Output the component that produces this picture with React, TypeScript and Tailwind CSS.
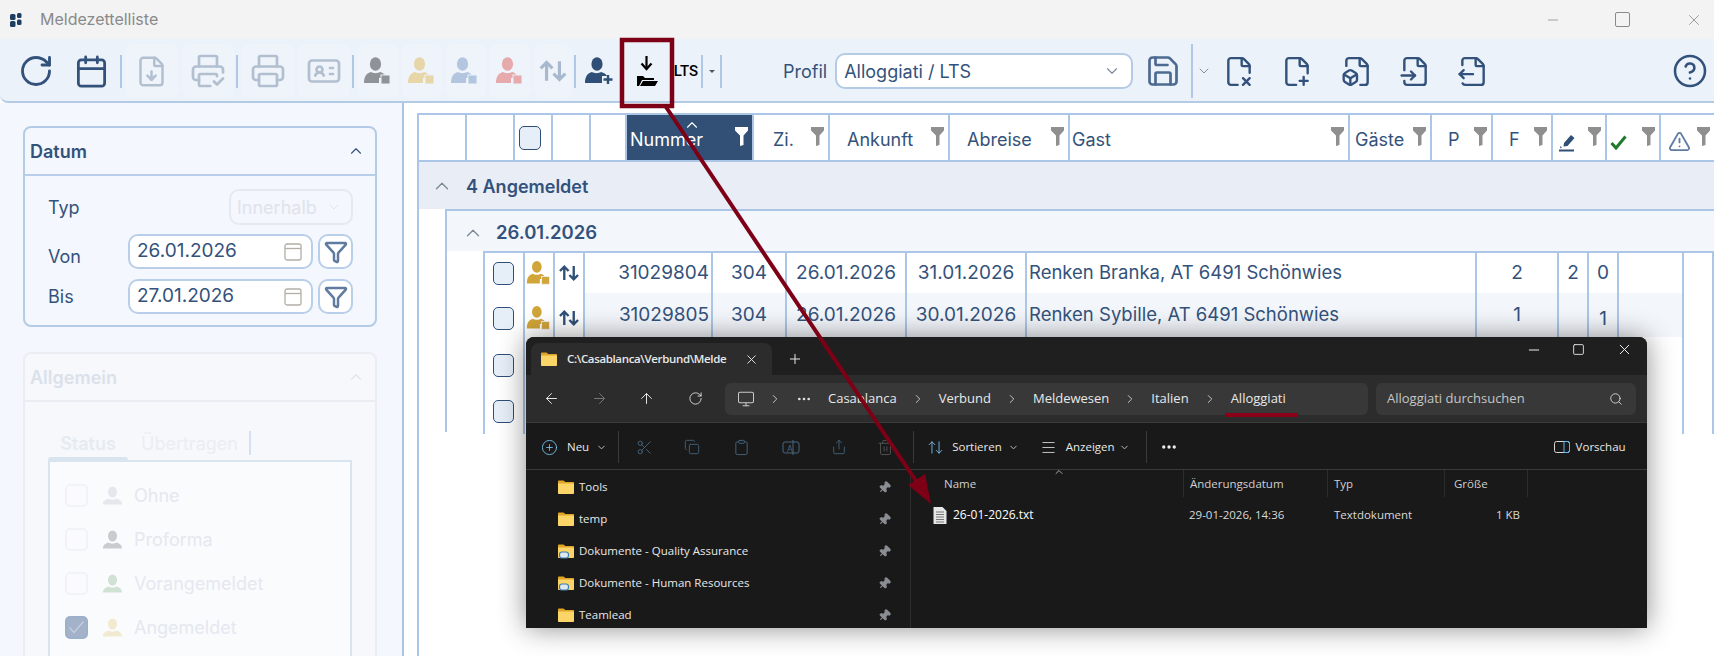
import {
  ArrowLeft,
  ArrowRight,
  ArrowUp,
  ArrowUpDown,
  Calendar,
  ChevronDown,
  ChevronRight,
  ChevronUp,
  CirclePlus,
  Clipboard,
  CircleHelp,
  Copy,
  Ellipsis,
  FileBox,
  FileDown,
  FileInput,
  FileOutput,
  FilePlus2,
  FileX2,
  Funnel,
  IdCard,
  Menu,
  Minus,
  Monitor,
  Pin,
  Plus,
  Printer,
  PrinterCheck,
  RotateCw,
  Save,
  Scissors,
  Search,
  Share,
  Square,
  Trash2,
  TriangleAlert,
  X,
} from "lucide-react";

const ink = "#33527b";

function PersonIcon({ color, badge, size = 30 }: { color: string; badge?: boolean; size?: number }) {
  return (
    <svg width={size} height={size} viewBox="0 0 30 30">
      <ellipse cx="12.5" cy="8" rx="5.6" ry="6.8" fill={color} />
      <path d="M1 27c0-7 3-10 7-11 2 1.500 7 1.500 9 0 3 .8 6 3 6.500 6H16v5z" fill={color} />
      {badge && <rect x="18" y="19" width="9" height="9" fill={color} stroke="#ecf2fa" strokeWidth="1" />}
    </svg>
  );
}

function PlainPerson({ color }: { color: string }) {
  return (
    <svg width="19" height="19" viewBox="0 0 19 19">
      <ellipse cx="9.500" cy="6" rx="4.500" ry="5.500" fill={color} />
      <path d="M0 18.500c0-3.500 2.500-5 5.500-6 2 1.500 6 1.500 8 0 3 1 5.500 2.500 5.500 6z" fill={color} />
    </svg>
  );
}

function PersonPlusIcon() {
  return (
    <svg width="30" height="30" viewBox="0 0 30 30">
      <ellipse cx="12" cy="8" rx="5.600" ry="6.800" fill="#2f4f78" />
      <path d="M0 27c0-7 3-10 7-11 2 1.500 7 1.500 9 0 3 .8 5 2 6 4h-5v7z" fill="#2f4f78" />
      <path d="M23 19v9M18.500 23.500h9" stroke="#2f4f78" strokeWidth="2.400" />
    </svg>
  );
}

function SwapArrows({ color, size = 28 }: { color: string; size?: number }) {
  return (
    <svg width={size} height={size} viewBox="0 0 28 28" fill="none" stroke={color} strokeWidth="3">
      <path d="M8 23V6M2.500 11.500 8 6l5.500 5.500M20 5v17M14.500 16.500 20 22l5.500-5.500" />
    </svg>
  );
}

function FolderArrowIcon() {
  return (
    <svg width="24" height="32" viewBox="0 0 24 32">
      <path d="M11.500 1v11" stroke="#000" strokeWidth="2.200" />
      <path d="M6.500 8.500 11.500 14l5-5.500" stroke="#000" strokeWidth="2.200" fill="none" />
      <path d="M2 31V21h6l2 2h9v2H7l-3 6z" fill="#000" />
      <path d="M5 31l3-5h15l-3 5z" fill="#000" />
    </svg>
  );
}

function TableFunnel({ white }: { white?: boolean }) {
  return (
    <svg className="absolute right-[4px] top-[12px]" width="13" height="19" viewBox="0 0 13 19">
      <path d="M0 0h13v3.500L8.500 8.500V18l-3.500 1V8.500L0 3.500z" fill={white ? "#fff" : "#8f8f8f"} />
    </svg>
  );
}

function PencilMark() {
  return (
    <svg width="17" height="19" viewBox="0 0 17 19">
      <path d="M5 10 12 2l3.500 3-7 8-4 .5z" fill="#2f4f78" />
      <path d="M1 13l2 1.500-1.500 1z" fill="#2f4f78" />
      <path d="M0 17.500h15" stroke="#2f4f78" strokeWidth="2" />
    </svg>
  );
}

function GreenCheck() {
  return (
    <svg width="17" height="15" viewBox="0 0 17 15" fill="none">
      <path d="M1.500 8 6 13 15.500 1.500" stroke="#1f7a2c" strokeWidth="3" />
    </svg>
  );
}

function SmallCalendar() {
  return (
    <svg width="18" height="18" viewBox="0 0 18 18" fill="none">
      <rect x="1" y="1" width="16" height="16" rx="2" stroke="#b3aea6" strokeWidth="1.300" />
      <path d="M1 5.500h16" stroke="#b3aea6" strokeWidth="1.300" />
    </svg>
  );
}

function Checkbox() {
  return <div className="w-[21px] h-[23px] rounded-[5px] border-[1.5px] border-[#2f4f78] bg-[#e6eef8]" />;
}

function ExplorerFolder({ network, size = 16 }: { network?: boolean; size?: number }) {
  return (
    <svg width={size} height={size} viewBox="0 0 16 16">
      <path d="M0 2.500C0 1.700.6 1.500 1 1.500h4.500L7.300 3H15c.6 0 1 .4 1 1v1H0z" fill="#e0a526" />
      <path d="M0 4.500h16V14c0 .6-.4 1-1 1H1c-.6 0-1-.4-1-1z" fill="#fcd568" />
      {network && <rect x="1.500" y="9" width="9" height="6" rx="2.500" fill="#dfe7ef" stroke="#3f7fb5" strokeWidth="1.200" />}
    </svg>
  );
}

function TxtFile() {
  return (
    <svg width="14" height="17" viewBox="0 0 14 17">
      <path d="M.5 0H9.500L13.500 4V17H.5z" fill="#e6e6e6" />
      <path d="M3 5h8M3 7.500h8M3 10h8M3 12.500h8M3 15h8" stroke="#777" strokeWidth="1" />
    </svg>
  );
}

const toolBase = "flex items-center justify-center shrink-0";
const fadedBox = "h-[54px] rounded-lg bg-white/20 flex items-center justify-center";

function ToolSep({ w = "w-[4px]" }: { w?: string }) {
  return (
    <div className={`${toolBase} ${w}`}>
      <div className="w-[2px] h-[33px] bg-[#aec8e6]" />
    </div>
  );
}

function Toolbar() {
  return (
    <div className="flex items-center h-[64px] pl-[8px] pt-[2px] bg-[#ecf2fa] border-b-2 border-[#b4cbe6] rounded-bl-lg shrink-0">
      <div className={`${toolBase} w-[55px]`}><RotateCw size={36} color={ink} strokeWidth={1.900} /></div>
      <div className={`${toolBase} w-[56px]`}><Calendar size={35} color={ink} strokeWidth={1.900} /></div>
      <ToolSep />
      <div className={`${toolBase} w-[57px]`}><div className={`${fadedBox} w-[54px]`}><FileDown size={33} color="#b2bfd0" strokeWidth={1.800} /></div></div>
      <div className={`${toolBase} w-[55px]`}><div className={`${fadedBox} w-[52px]`}><PrinterCheck size={36} color="#b2bfd0" strokeWidth={1.800} /></div></div>
      <ToolSep />
      <div className={`${toolBase} w-[57px]`}><div className={`${fadedBox} w-[54px]`}><Printer size={36} color="#b2bfd0" strokeWidth={1.800} /></div></div>
      <div className={`${toolBase} w-[55px]`}><div className={`${fadedBox} w-[52px]`}><IdCard size={36} color="#b2bfd0" strokeWidth={1.800} /></div></div>
      <ToolSep />
      <div className={`${toolBase} w-[45px]`}><div className={`${fadedBox} w-[42px]`}><PersonIcon color="#8f9296" badge /></div></div>
      <div className={`${toolBase} w-[43px]`}><div className={`${fadedBox} w-[40px]`}><PersonIcon color="#e6d6a8" badge /></div></div>
      <div className={`${toolBase} w-[44px]`}><div className={`${fadedBox} w-[41px]`}><PersonIcon color="#b2c6e0" badge /></div></div>
      <div className={`${toolBase} w-[45px]`}><div className={`${fadedBox} w-[42px]`}><PersonIcon color="#e6a9ac" badge /></div></div>
      <div className={`${toolBase} w-[41px]`}><div className={`${fadedBox} w-[38px]`}><SwapArrows color="#a9b9cd" size={30} /></div></div>
      <ToolSep />
      <div className={`${toolBase} w-[46px]`}><PersonPlusIcon /></div>
      <div className={`${toolBase} w-[48px]`}><FolderArrowIcon /></div>
      <div className={`${toolBase} w-[30px] text-[15px] font-medium text-black font-['Roboto',sans-serif]`}>LTS</div>
      <ToolSep w="w-[2px]" />
      <div className={`${toolBase} w-[17px]`}><div className="w-0 h-0 border-x-[3px] border-x-transparent border-t-[3px] border-t-[#555]" /></div>
      <ToolSep w="w-[2px]" />
      <span className="ml-[61px] text-[18px] text-[#33527b]">Profil</span>
      <div className="ml-[8px] w-[298px] h-[36px] px-[7px] flex items-center justify-between rounded-[10px] border-2 border-[#b4cbe6] bg-white text-[18px] text-[#33527b]">
        <span>Alloggiati / LTS</span>
        <ChevronDown size={18} color="#7a8a9c" strokeWidth={1.500} className="mr-[3px]" />
      </div>
      <div className={`${toolBase} ml-[12px] w-[36px]`}><Save size={36} color="#4d6a90" strokeWidth={1.800} /></div>
      <div className="ml-[10px] w-[2px] h-[54px] bg-[#aec8e6]" />
      <div className={`${toolBase} w-[22px]`}><ChevronDown size={16} color="#7a8a9c" strokeWidth={1.400} /></div>
      <div className={`${toolBase} ml-[8px] w-[32px]`}><FileX2 size={37} color={ink} strokeWidth={1.800} /></div>
      <div className={`${toolBase} ml-[26px] w-[32px]`}><FilePlus2 size={37} color={ink} strokeWidth={1.800} /></div>
      <div className={`${toolBase} ml-[28px] w-[32px]`}><FileBox size={37} color={ink} strokeWidth={1.800} /></div>
      <div className={`${toolBase} ml-[26px] w-[32px]`}><FileInput size={37} color={ink} strokeWidth={1.800} /></div>
      <div className={`${toolBase} ml-[26px] w-[32px]`}><FileOutput size={37} color={ink} strokeWidth={1.800} /></div>
      <div className={`${toolBase} ml-[183px] w-[36px]`}><CircleHelp size={38} color={ink} strokeWidth={1.700} /></div>
    </div>
  );
}

function DateRow({ label, value, labelPad, className }: { label: string; value: string; labelPad?: string; className?: string }) {
  return (
    <div className={`flex items-center pl-[23px] ${className ?? ""}`}>
      <span className={`w-[80px] ${labelPad ?? ""}`}>{label}</span>
      <div className="w-[185px] h-[35px] flex items-center justify-between pl-[7px] pr-[9px] rounded-[10px] border-2 border-[#b9cfe9] bg-white">
        <span className="text-[19px]">{value}</span>
        <SmallCalendar />
      </div>
      <div className="ml-[5px] w-[35px] h-[35px] flex items-center justify-center rounded-[10px] border-2 border-[#b9cfe9] bg-white">
        <Funnel size={24} color="#5f7ba0" strokeWidth={2.500} />
      </div>
    </div>
  );
}

function StatusRow({ label, color, checked }: { label: string; color: string; checked?: boolean }) {
  return (
    <div className="flex items-center h-[44px]">
      <div className={`w-[23px] h-[23px] rounded-[5px] border-2 flex items-center justify-center ${checked ? "bg-[#a3b2c8] border-[#9db0c9]" : "bg-[#fbfbfd] border-[#f1f3f7]"}`}>
        {checked && (
          <svg width="17" height="14" viewBox="0 0 17 14" fill="none">
            <path d="M1.500 7.500 6 12.500 15.500 1.500" stroke="#c4cfdd" strokeWidth="1.300" />
          </svg>
        )}
      </div>
      <div className="ml-[15px] w-[19px] flex justify-center">
        <PlainPerson color={color} />
      </div>
      <span className="ml-[12px] text-[#e4e8f0]">{label}</span>
    </div>
  );
}

function Sidebar() {
  return (
    <aside className="w-[404px] shrink-0 bg-[#f4f7fd] border-r-2 border-[#a9c5e6] pl-[23px] pt-[23px] text-[18px] text-[#33527b]">
      <section className="w-[354px] h-[201px] rounded-lg border-2 border-[#b4cbe6]">
        <div className="h-[48px] flex items-center justify-between pl-[5px] pr-[10px] border-b-2 border-[#b9cfe9]">
          <span className="font-semibold pt-[1px]">Datum</span>
          <ChevronUp size={18} color="#33527b" strokeWidth={1.500} />
        </div>
        <div className="flex items-center pl-[23px] pr-[22px] mt-[13px]">
          <span className="flex-1">Typ</span>
          <div className="w-[124px] h-[36px] flex items-center justify-between pl-[6px] pr-[9px] rounded-[10px] border-2 border-[#e6eaf0] text-[#dfe3ea]">
            <span>Innerhalb</span>
            <ChevronDown size={16} color="#e0e4ea" strokeWidth={1.500} />
          </div>
        </div>
        <DateRow label="Von" value="26.01.2026" labelPad="pt-[10px]" className="mt-[8px]" />
        <DateRow label="Bis" value="27.01.2026" className="mt-[9px]" />
      </section>
      <section className="mt-[25px] w-[354px] h-[400px] rounded-lg border-2 border-[#eaedf3] bg-[#f6f8fc]">
        <div className="h-[48px] flex items-center justify-between pl-[5px] pr-[10px] border-b-2 border-[#eaedf3]">
          <span className="font-semibold text-[#dbe1ea]">Allgemein</span>
          <ChevronUp size={18} color="#e0e4ea" strokeWidth={1.500} />
        </div>
        <div className="ml-[23px] mr-[23px] mt-[27px]">
          <div className="flex items-center h-[28px]">
            <span className="w-[80px] text-center font-semibold text-[#e6ebf2]">Status</span>
            <span className="ml-[13px] text-[#eaedf3]">Übertragen</span>
            <div className="ml-[11px] w-[2px] h-[24px] bg-[#d6e2f0]" />
          </div>
          <div className="w-[80px] h-[3px] rounded-t bg-[#d8e4f0]" />
          <div className="h-[300px] border-2 border-[#d8e4f0] bg-[#fafbfd] pl-[15px] pt-[11px]">
            <StatusRow label="Ohne" color="#e4e7ec" />
            <StatusRow label="Proforma" color="#c9cbce" />
            <StatusRow label="Vorangemeldet" color="#cfe2d3" />
            <StatusRow label="Angemeldet" color="#f2ead0" checked />
          </div>
        </div>
      </section>
    </aside>
  );
}

const headerCols = [
  { w: "w-[46px]" },
  { w: "w-[48px]" },
  { w: "w-[38px]", check: true },
  { w: "w-[38px]" },
  { w: "w-[36px]" },
  { w: "w-[127px]", label: "Nummer", pl: "pl-[3px]", active: true },
  { w: "w-[76px]", label: "Zi.", pl: "pl-[19px]", funnel: true },
  { w: "w-[120px]", label: "Ankunft", pl: "pl-[17px]", funnel: true },
  { w: "w-[120px]", label: "Abreise", pl: "pl-[17px]", funnel: true },
  { w: "w-[280px]", label: "Gast", pl: "pl-[2px]", funnel: true },
  { w: "w-[82px]", label: "Gäste", pl: "pl-[5px]", funnel: true },
  { w: "w-[61px]", label: "P", pl: "pl-[16px]", funnel: true },
  { w: "w-[60px]", label: "F", pl: "pl-[16px]", funnel: true },
  { w: "w-[54px]", icon: "pencil", funnel: true },
  { w: "w-[54px]", icon: "check", funnel: true },
  { w: "w-[55px]", icon: "warn", funnel: true },
];

function TableHeader() {
  return (
    <div className="flex h-[49px] border-y-2 border-[#abc6e6] bg-white text-[18px] text-[#33527b] shrink-0">
      {headerCols.map((c, i) => (
        <div
          key={i}
          className={`relative flex items-center shrink-0 ${c.w} ${c.pl ?? ""} ${i > 0 ? "border-l-2 border-[#abc6e6]" : ""} ${c.active ? "bg-[#325076] text-white" : ""}`}
        >
          {c.check && (
            <div className="ml-[4px] w-[22px] h-[24px] rounded-[5px] border-[1.5px] border-[#2f4f78] bg-[#e6eef8]" />
          )}
          {c.label && <span className="mt-[3px]">{c.label}</span>}
          {c.active && <ChevronUp size={18} color="#fff" strokeWidth={1.500} className="absolute left-[56px] top-[1px]" />}
          {c.icon === "pencil" && <div className="pl-[6px] pt-[9px]"><PencilMark /></div>}
          {c.icon === "check" && <div className="pl-[3px] pt-[10px]"><GreenCheck /></div>}
          {c.icon === "warn" && <div className="pl-[7px] pt-[8px]"><TriangleAlert size={23} color="#5f7b9f" strokeWidth={1.900} /></div>}
          {(c.funnel || c.active) && <TableFunnel white={c.active} />}
        </div>
      ))}
    </div>
  );
}

const rows = [
  { h: "h-[40px]", chk: "", nr: "31029804", a: "26.01.2026", b: "31.01.2026", g: "Renken Branka, AT 6491 Schönwies", p: "2", f: "2", z: "0", bg: "" },
  { h: "h-[44px]", chk: "pt-[6px]", nr: "31029805", a: "26.01.2026", b: "30.01.2026", g: "Renken Sybille, AT 6491 Schönwies", p: "1", f: "", z: "1", bg: "bg-[#f3f6fb]" },
  { h: "h-[46px]", chk: "pt-[10px]", nr: "", a: "", b: "", g: "", p: "", f: "", z: "", bg: "" },
  { h: "h-[51px]", chk: "pt-[5px]", nr: "", a: "", b: "", g: "", p: "", f: "", z: "", bg: "" },
];

const line = "border-l-2 border-[#abc6e6]";

function DataRow({ r }: { r: (typeof rows)[number] }) {
  const shown = r.nr !== "";
  return (
    <div className={`flex ${r.h} text-[19px] text-[#33527b]`}>
      <div className={`w-[38px] shrink-0 flex items-center justify-center pr-[2px] ${r.chk}`}><Checkbox /></div>
      <div className={`w-[30px] shrink-0 flex items-center justify-center ${r.chk} ${line}`}>
        {shown && <PersonIcon color="#d2a53a" badge size={26} />}
      </div>
      <div className={`w-[30px] shrink-0 flex items-center justify-center ${r.chk} ${line}`}>
        {shown && <SwapArrows color="#2f4f78" size={22} />}
      </div>
      <div className={`flex flex-1 ${r.bg}`}>
        <div className={`w-[128px] flex items-center justify-end pr-[2px] ${line}`}>{r.nr}</div>
        <div className={`w-[74px] flex items-center justify-center ${line}`}>{shown ? "304" : ""}</div>
        <div className={`w-[120px] flex items-center justify-center ${line}`}>{r.a}</div>
        <div className={`w-[120px] flex items-center justify-center ${line}`}>{r.b}</div>
        <div className={`w-[450px] flex items-center pl-[2px] text-[18.5px] ${line}`}>{r.g}</div>
        <div className={`w-[82px] flex items-center justify-center ${line}`}>{r.p}</div>
        <div className={`w-[30px] flex items-center justify-center ${line}`}>{r.f}</div>
        <div className={`w-[30px] flex items-center justify-center ${line} ${r.z === "1" ? "pt-[8px]" : ""}`}>{r.z}</div>
        <div className={`w-[30px] ${line}`} />
      </div>
      <div className={`w-[30px] bg-white ${line}`} />
      <div className={`w-[2px] ${line}`} />
    </div>
  );
}

function MainTable() {
  return (
    <main className="flex-1 pl-[13px] pt-[10px] bg-white min-w-0">
      <div className="flex flex-col h-full border-l-2 border-[#abc6e6]">
        <TableHeader />
        <div className="h-[47px] shrink-0 flex items-center bg-[#e8edf6] text-[18px] font-semibold text-[#33527b]">
          <ChevronUp size={22} color="#7d8896" strokeWidth={1.400} className="ml-[12px]" />
          <span className="ml-[13px] pt-[1px]">4 Angemeldet</span>
        </div>
        <div className="ml-[26px] border-l-2 border-[#abc6e6] h-[223px] shrink-0">
          <div className="h-[42px] flex items-center border-t-2 border-[#abc6e6] bg-[#f3f6fb] text-[18.5px] font-semibold text-[#33527b]">
            <ChevronUp size={22} color="#7d8896" strokeWidth={1.400} className="ml-[15px] mt-[4px]" />
            <span className="ml-[12px] pt-[4px]">26.01.2026</span>
          </div>
          <div className="ml-[36px] border-l-2 border-t-2 border-[#abc6e6]">
            {rows.map((r, i) => (
              <DataRow key={i} r={r} />
            ))}
          </div>
        </div>
      </div>
    </main>
  );
}

const navFolders = [
  { name: "Tools" },
  { name: "temp" },
  { name: "Dokumente - Quality Assurance", network: true },
  { name: "Dokumente - Human Resources", network: true },
  { name: "Teamlead" },
];

function Crumb({ label, className }: { label: string; className?: string }) {
  return (
    <>
      <ChevronRight size={14} color="#d8d8d8" strokeWidth={1.500} className={className} />
      <span className="ml-[14px]">{label}</span>
    </>
  );
}

function Explorer() {
  return (
    <div className="absolute left-[526px] top-[337px] w-[1121px] h-[291px] rounded-t-lg flex flex-col overflow-hidden bg-[#191919] text-[13px] text-[#e8e8e8] shadow-[0_0_28px_rgba(0,0,0,0.45)] font-['Open_Sans',sans-serif]">
      <div className="h-[38px] shrink-0 flex items-end bg-[#1f1f1f]">
        <div className="ml-[5px] w-[241px] h-[32px] flex items-center rounded-t-lg bg-[#2c2c2c] pl-[10px]">
          <ExplorerFolder />
          <span className="ml-[10px] w-[163px] text-[11.5px] font-semibold tracking-[-0.35px] whitespace-nowrap">C:\Casablanca\Verbund\Melde</span>
          <X size={15} color="#e8e8e8" strokeWidth={1.500} className="ml-[14px]" />
        </div>
        <Plus size={16} color="#e8e8e8" strokeWidth={1.500} className="ml-[15px] mb-[8px]" />
        <div className="flex-1 flex items-center justify-end self-stretch pb-[13px]">
          <Minus size={16} color="#f0f0f0" strokeWidth={1.500} />
          <Square size={13} color="#f0f0f0" strokeWidth={1.600} className="ml-[30px]" />
          <X size={17} color="#f0f0f0" strokeWidth={1.400} className="ml-[31px] mr-[14px]" />
        </div>
      </div>
      <div className="h-[48px] shrink-0 flex items-center bg-[#2c2c2c] border-b border-[#3a3a3a]">
        <ArrowLeft size={17} color="#e6e6e6" strokeWidth={1.400} className="ml-[17px]" />
        <ArrowRight size={17} color="#777" strokeWidth={1.400} className="ml-[31px]" />
        <ArrowUp size={17} color="#e6e6e6" strokeWidth={1.400} className="ml-[30px]" />
        <RotateCw size={15} color="#e6e6e6" strokeWidth={1.400} className="ml-[33px]" />
        <div className="ml-[22px] w-[643px] h-[32px] flex items-center rounded-md bg-[#383838] pl-[12px]">
          <Monitor size={18} color="#c9c9c9" strokeWidth={1.400} />
          <ChevronRight size={14} color="#d8d8d8" strokeWidth={1.500} className="ml-[13px]" />
          <Ellipsis size={16} color="#e0e0e0" className="ml-[14px]" />
          <span className="ml-[16px]">Casablanca</span>
          <Crumb label="Verbund" className="ml-[14px]" />
          <Crumb label="Meldewesen" className="ml-[14px]" />
          <Crumb label="Italien" className="ml-[14px]" />
          <Crumb label="Alloggiati" className="ml-[14px]" />
        </div>
        <div className="ml-[8px] w-[260px] h-[32px] flex items-center justify-between rounded-md bg-[#383838] pl-[11px] pr-[13px] text-[#c6c6c6]">
          <span>Alloggiati durchsuchen</span>
          <Search size={14} color="#dcdcdc" strokeWidth={1.500} />
        </div>
      </div>
      <div className="h-[47px] shrink-0 flex items-center pt-[2px] bg-[#191919] border-b border-[#3a3a3a] text-[11.5px]">
        <CirclePlus size={17} color="#7cc8f4" strokeWidth={1.200} className="ml-[15px]" />
        <span className="ml-[9px]">Neu</span>
        <ChevronDown size={11} color="#c8c8c8" className="ml-[7px]" />
        <div className="ml-[11px] w-px h-[32px] bg-[#3a3a3a]" />
        <Scissors size={17} color="#47667f" strokeWidth={1.300} className="ml-[17px]" />
        <Copy size={16} color="#47667f" strokeWidth={1.300} className="ml-[31px]" />
        <Clipboard size={17} color="#47667f" strokeWidth={1.300} className="ml-[33px]" />
        <svg width="18" height="17" viewBox="0 0 18 17" fill="none" className="ml-[32px]">
          <rect x="1" y="3" width="16" height="11" rx="2" stroke="#47667f" />
          <text x="5" y="12.500" fontSize="9" fill="#47667f">A</text>
          <path d="M11 1v15" stroke="#47667f" />
        </svg>
        <Share size={16} color="#47667f" strokeWidth={1.300} className="ml-[31px]" />
        <Trash2 size={17} color="#555" strokeWidth={1.300} className="ml-[30px]" />
        <div className="ml-[19px] w-px h-[32px] bg-[#3a3a3a]" />
        <ArrowUpDown size={17} color="#7cc8f4" strokeWidth={1.200} className="ml-[13px]" />
        <span className="ml-[8px]">Sortieren</span>
        <ChevronDown size={11} color="#c8c8c8" className="ml-[6px]" />
        <Menu size={17} color="#e0e0e0" strokeWidth={1.200} className="ml-[21px]" />
        <span className="ml-[9px]">Anzeigen</span>
        <ChevronDown size={11} color="#c8c8c8" className="ml-[4px]" />
        <div className="ml-[16px] w-px h-[32px] bg-[#3a3a3a]" />
        <Ellipsis size={18} color="#f0f0f0" strokeWidth={2.400} className="ml-[13px]" />
        <svg width="16" height="12" viewBox="0 0 16 12" fill="none" className="ml-[376px]">
          <rect x=".5" y=".5" width="15" height="11" rx="2" stroke="#d8d8d8" />
          <path d="M10 .5h3.500a2 2 0 0 1 2 2v7a2 2 0 0 1-2 2H10z" stroke="#5db8ee" />
        </svg>
        <span className="ml-[6px]">Vorschau</span>
      </div>
      <div className="flex flex-1 min-h-0 text-[11.5px]">
        <div className="w-[385px] shrink-0 border-r border-[#2c2c2c] pl-[32px] pt-[1px] pr-[19px]">
          {navFolders.map((f) => (
            <div key={f.name} className="h-[32px] flex items-center">
              <ExplorerFolder network={f.network} />
              <span className="ml-[5px] flex-1">{f.name}</span>
              <Pin size={13} color="#8b8f94" fill="#8b8f94" className="rotate-45" />
            </div>
          ))}
        </div>
        <div className="flex-1 relative">
          <ChevronUp size={12} color="#aaa" className="absolute left-[142px] top-[-4px]" />
          <div className="grid grid-cols-[273px_144px_117px_83px] h-[27px] items-center text-[#cfcfcf]">
            <span className="pl-[33px] border-r border-[#2c2c2c] h-full flex items-center">Name</span>
            <span className="pl-[6px] border-r border-[#2c2c2c] h-full flex items-center">Änderungsdatum</span>
            <span className="pl-[6px] border-r border-[#2c2c2c] h-full flex items-center">Typ</span>
            <span className="pl-[9px] border-r border-[#2c2c2c] h-full flex items-center">Größe</span>
          </div>
          <div className="grid grid-cols-[273px_144px_117px_75px] items-center h-[36px]">
            <div className="flex items-center pl-[22px] text-white text-[12px]">
              <TxtFile />
              <span className="ml-[6px]">26-01-2026.txt</span>
            </div>
            <span className="pl-[5px] text-[#d8d8d8]">29-01-2026, 14:36</span>
            <span className="pl-[6px] text-[#d8d8d8]">Textdokument</span>
            <span className="text-right text-[#d8d8d8]">1 KB</span>
          </div>
        </div>
      </div>
    </div>
  );
}

function Annotations() {
  return (
    <svg className="absolute inset-0 pointer-events-none" width="1714" height="656" viewBox="0 0 1714 656">
      <rect x="622" y="40" width="50" height="66" fill="none" stroke="#7d0016" strokeWidth="4.500" />
      <path d="M666 107 922 490" stroke="#7d0016" strokeWidth="4" />
      <path d="M931 504 908 485 925 474z" fill="#7d0016" />
      <rect x="1225" y="413" width="73" height="4" fill="#8a0018" />
    </svg>
  );
}

export default function App() {
  return (
    <div className="relative w-[1714px] h-[656px] overflow-hidden flex flex-col bg-white font-['Inter',sans-serif]">
      <div className="h-[39px] shrink-0 flex items-center bg-[#f3f3f3] pl-[10px]">
        <svg width="12" height="14" viewBox="0 0 12 14">
          <rect x="0" y="1" width="5.500" height="6" rx="1.500" fill="#1d3f5f" />
          <rect x="7" y="0" width="4.500" height="5" rx="1.500" fill="#1d3f5f" />
          <rect x="0" y="8" width="5.500" height="6" rx="1.500" fill="#1d3f5f" />
          <rect x="7" y="6.500" width="4.500" height="5.500" rx="1.500" fill="#1d3f5f" />
        </svg>
        <span className="ml-[18px] -mt-[1px] text-[16px] text-[#8a8a8a]">Meldezettelliste</span>
        <div className="flex-1 flex items-center justify-end">
          <Minus size={16} color="#8a8a8a" strokeWidth={1.200} />
          <div className="ml-[54px] w-[15px] h-[15px] rounded-[2px] border-[1.500px] border-[#8a8a8a]" />
          <X size={18} color="#8a8a8a" strokeWidth={1.100} className="ml-[55px] mr-[11px]" />
        </div>
      </div>
      <Toolbar />
      <div className="flex flex-1 min-h-0">
        <Sidebar />
        <MainTable />
      </div>
      <Explorer />
      <Annotations />
    </div>
  );
}
